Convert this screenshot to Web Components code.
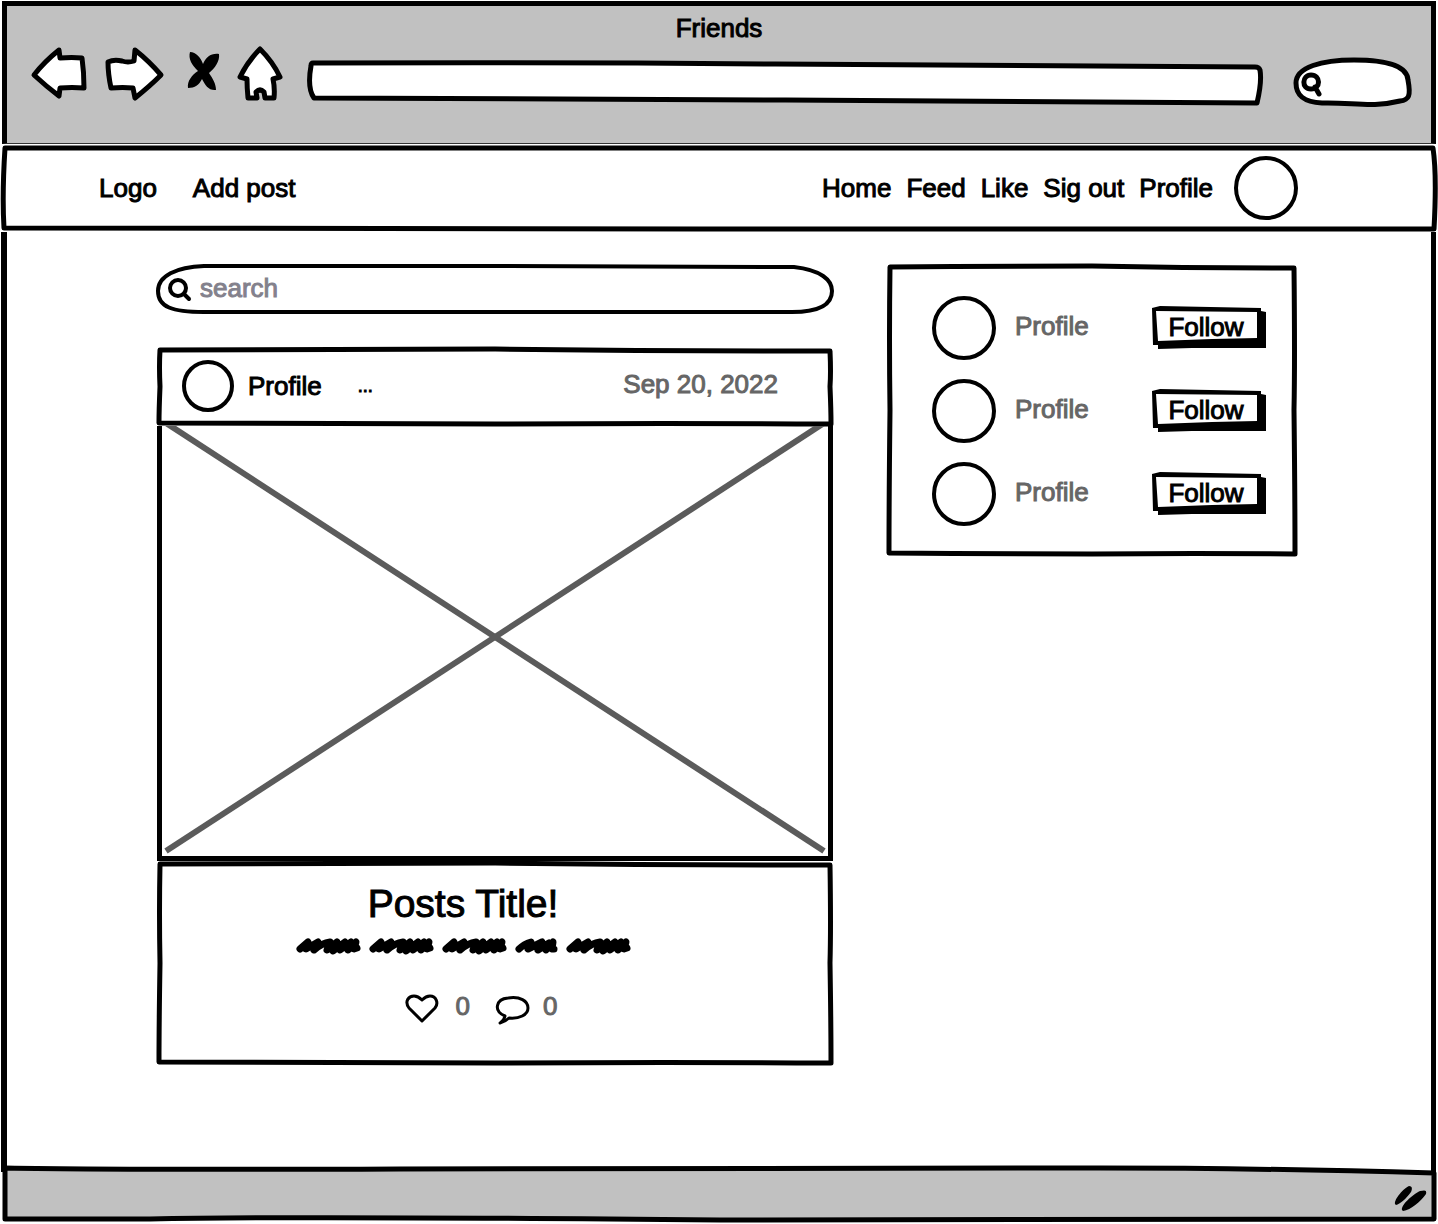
<!DOCTYPE html>
<html lang="en">
<head>
<meta charset="utf-8">
<title>Friends</title>
<style>
  html, body { margin: 0; height: 100%; }
  body { background: #fff; color: #000; font: 26px/32px "Liberation Sans", sans-serif; -webkit-text-stroke: 1px currentColor; }
</style>
</head>
<body>
<friends-app></friends-app>

<script>
const base = `
  *, *::before { box-sizing: border-box; }
  :host { display: block; box-sizing: border-box; -webkit-text-stroke: 1px currentColor; }
  svg { display: block; overflow: visible; }
  button, input { font: inherit; color: inherit; background: none; border: 0; padding: 0; margin: 0; outline-offset: 2px; }
  button { cursor: pointer; }
  .stack { display: grid; grid-template: minmax(0, 1fr) / minmax(0, 1fr); }
  .stack > *, ::slotted(header), ::slotted(div), ::slotted(ul) { grid-area: 1 / 1; min-width: 0; }
  .ink { contain: size; width: 100%; height: 100%; pointer-events: none; }
  .ink path { vector-effect: non-scaling-stroke; stroke: #000; stroke-width: 5; stroke-linejoin: round; stroke-linecap: round; fill: #fff; }
`;
function define(name, css, html, ready) {
  const t = document.createElement('template');
  t.innerHTML = `<style>${base}${css}</style>${html}`;
  customElements.define(name, class extends HTMLElement {
    constructor() {
      super();
      this.attachShadow({ mode: 'open' }).append(t.content.cloneNode(true));
    }
    connectedCallback() { if (ready) ready(this); }
  });
}
const ink = (w, h, body) =>
  `<svg class="ink" viewBox="0 0 ${w} ${h}" preserveAspectRatio="none" aria-hidden="true">${body}</svg>`;

/* A hand-drawn rectangle round whatever is slotted in; the ratio attribute
   ("width height") keeps the wobble of its edges equally small in every box */
define('sketch-box', `
  :host { display: grid; }
`, `<div class="stack">${ink(100, 100, '<path/>')}<slot></slot></div>`, host => {
  const [w, h] = (host.getAttribute('ratio') || '100 100').split(' ').map(Number);
  const r = w - 3, b = h - 3, m = w / 2;
  host.shadowRoot.querySelector('svg').setAttribute('viewBox', `0 0 ${w} ${h}`);
  host.shadowRoot.querySelector('path').setAttribute('d',
    `M4 3 Q${m / 2} 2 ${m} 2 Q${m * 1.5} 4 ${r - 1} 4 Q${r} ${h / 3} ${r - 1} ${h / 2} Q${r} ${h * .8} ${r} ${b + 1} Q${m * 1.5} ${b} ${m} ${b + 1} Q${m / 2} ${b + 1} 3 ${b} Q3 ${h * .8} 4 ${h / 2} Q3 ${h / 4} 4 3Z`);
});

/* Round user picture */
define('user-avatar', `
  :host { flex: none; width: 64px; height: 64px; border: 4px solid #000; border-radius: 50%; background: #fff; }
  :host([small]) { width: 52px; height: 52px; }
`, ``);

/* Button with a heavy drop edge */
define('sketch-button', `
  :host { flex: none; width: 114px; }
  button { width: 100%; height: 44px; }
  .ink path { stroke: none; }
  span { align-self: center; padding-right: 6px; padding-bottom: 2px; }
`, `<button class="stack" type="button">
  ${ink(114, 44, '<path style="fill:#000" d="M0 2 L8 0 L109 2 L109 5 L114 6 L114 42 L40 42 L6 43 L6 39 L1 39Z"/><path d="M4 5 L105 6 L105 32 L60 33 L6 35Z"/>')}
  <span><slot></slot></span>
</button>`);

/* Browser toolbar */
define('browser-bar', `
  :host { height: 143px; margin: 1px 2px 1px; border: 5px solid #000; border-bottom: 1px solid #333; background: #c1c1c1; }
  h1 { margin: 0; padding-top: 6px; font: inherit; text-align: center; line-height: 32px; }
  .row { display: flex; align-items: end; gap: 12px; padding: 0 18px 0 23px; }
  button { flex: none; }
  button path { fill: #fff; stroke: #000; stroke-width: 5; stroke-linejoin: round; }
  button.stop path { fill: #000; stroke: none; }
  .url { flex: 1; height: 46px; }
  .find { flex: none; width: 121px; height: 48px; margin-left: 16px; }
  .url input { margin: 6px 12px; }
  .find input { margin: 8px 16px 8px 34px; }
`, `<h1>Friends</h1>
<div class="row">
  <button type="button" aria-label="Back"><svg width="62" height="62" viewBox="30 44 62 62"><path d="M59 50 Q44 62 34 75 Q47 87 59 96 L60 88 Q72 87 84 88 Q84 72 82 58 Q72 57 60 58Z"/></svg></button>
  <button type="button" aria-label="Forward"><svg width="62" height="62" viewBox="104 44 62 62"><path d="M135 50 Q149 61 161 75 Q150 86 135 98 L133 88 Q123 87 111 88 Q108 74 108 62 Q114 59 122 61 Q128 63 134 61Z"/></svg></button>
  <button type="button" class="stop" aria-label="Stop"><svg width="46" height="62" viewBox="178 44 46 62"><path d="M190 52 C196 52 201 58 203 64 C206 57 211 53 219 54 C220 61 215 68 209 73 C213 79 216 84 216 90 C209 91 205 85 202 79 C199 85 195 88 188 88 C187 81 192 75 198 71 C192 65 188 59 190 52Z"/></svg></button>
  <button type="button" aria-label="Home"><svg width="58" height="62" viewBox="236 43 58 62"><path d="M260 48 Q273 61 280 76 L273 78 Q275 87 274 97 L265 97 L264 91 Q260 87 256 91 L257 97 L248 97 Q247 87 247 78 L240 76 Q248 60 260 48Z"/></svg></button>
  <div class="url stack">
    ${ink(959, 46, '<path d="M7 3 Q250 2 470 4 L950 7 Q954 7 955 10 Q957 22 952 43 L480 40 L8 38 Q1 28 5 6 Q5 3 7 3Z"/>')}
    <input type="text" aria-label="Address">
  </div>
  <div class="find stack">
    ${ink(121, 48, '<path d="M4 25 C4 9 30 2 62 2 C85 2 115 5 116 22 C119 38 117 42 108 43 C80 50 60 44 30 45 C12 44 4 38 4 25Z"/><path d="M19 17 C10 17 9 31 19 31 C29 31 29 17 19 17 M23 29 L27 36"/>')}
    <input type="search" aria-label="Web search">
  </div>
</div>`);

/* Site navigation */
define('site-nav', `
  :host { height: 86px; }
  .stack { height: 100%; }
  nav { display: flex; align-items: center; gap: 15px; padding: 0 140px 0 99px; }
  a { color: inherit; text-decoration: none; white-space: nowrap; }
  .left { display: flex; gap: 36px; margin-right: auto; }
  user-avatar { margin-left: 6px; }
`, `<div class="stack">
  ${ink(1438, 86, '<path d="M5 3 L700 3 L1433 3 Q1437 30 1434 84 L700 84 L4 83 Q2 50 5 3Z"/>')}
  <nav>
    <div class="left"><a href="#logo">Logo</a><a href="#add">Add post</a></div>
    <a href="#home">Home</a><a href="#feed">Feed</a><a href="#like">Like</a><a href="#out">Sig out</a><a href="#profile">Profile</a>
    <user-avatar></user-avatar>
  </nav>
</div>`);

/* Pill-shaped search field */
define('search-field', `
  .stack { height: 50px; }
  .ink path { stroke-width: 4; }
  label { display: flex; align-items: center; gap: 9px; padding: 0 24px 0 12px; }
  label svg { flex: none; }
  input { flex: 1; min-width: 0; height: 40px; padding-bottom: 2px; }
  input::placeholder { color: #83818c; opacity: 1; }
`, `<div class="stack">
  ${ink(678, 50, '<path d="M2 27 C2 12 20 3 48 2 L340 2 L638 3 C665 6 676 16 676 27 C676 42 662 48 636 48 L340 48 L48 48 C16 48 2 43 2 27Z"/>')}
  <label>
    <svg width="23" height="24" viewBox="0 0 23 24" fill="none" stroke="#000" stroke-width="4" stroke-linecap="round" aria-hidden="true"><circle cx="10" cy="11" r="8"/><path d="M16 17 L21 22"/></svg>
    <input type="search" placeholder="search" aria-label="search">
  </label>
</div>`);

/* One post: author line, picture, caption */
const longWord = '<svg width="65" height="20" viewBox="0 0 65 20"><path d="M4 13 L12 6 L10 13 L22 6 L18 14 Q26 7 34 6 L31 14 L41 6 L37 15 L49 6 L44 14 L55 6 L52 14 L60 6 L58 13 L61 12 M34 11 H54"/></svg>';
const shortWord = '<svg width="43" height="20" viewBox="0 0 43 20"><path d="M4 13 Q9 8 16 6 L13 13 L27 6 L23 14 L34 7 L31 14 L38 6 L37 13 L39 13"/></svg>';
define('post-card', `
  header { display: flex; align-items: center; padding: 0 56px 2px 26px; height: 79px; }
  .name { margin: 0 36px 0 14px; }
  .more { font-size: 18px; }
  time { margin-left: auto; padding-bottom: 4px; color: #666; }
  .picture { height: 435px; margin: 0 1px; border: solid #000; border-width: 0 5px 5px; overflow: hidden; }
  .picture svg { width: 100%; height: 100%; }
  .picture line { stroke: #5b5b5b; stroke-width: 6; vector-effect: non-scaling-stroke; }
  .caption { display: flex; flex-direction: column; align-items: center; padding: 21px 64px 0 0; height: 204px; }
  h2 { margin: 0; font-size: 39px; font-weight: 400; line-height: 44px; }
  .words { display: flex; gap: 8px; margin-top: 10px; }
  .words path { fill: none; stroke: #000; stroke-width: 7; stroke-linecap: round; stroke-linejoin: round; }
  .acts { display: flex; gap: 26px; margin-top: 34px; padding-left: 36px; }
  .acts button { display: flex; align-items: center; gap: 18px; }
  .acts button + button { gap: 14px; }
  .acts svg { fill: none; stroke: #000; stroke-width: 3; stroke-linejoin: round; }
  .acts span { color: #666; padding-bottom: 4px; }
`, `<sketch-box ratio="678 79"><header>
    <user-avatar small></user-avatar>
    <span class="name">Profile</span>
    <button class="more" type="button" aria-label="More">...</button>
    <time datetime="2022-09-20">Sep 20, 2022</time>
  </header></sketch-box>
  <div class="picture"><svg viewBox="0 0 666 430" preserveAspectRatio="none" role="img" aria-label="Picture"><line x1="4" y1="-3" x2="662" y2="425"/><line x1="4" y1="425" x2="662" y2="-3"/></svg></div>
  <sketch-box ratio="678 204"><div class="caption">
    <h2>Posts Title!</h2>
    <div class="words" aria-hidden="true">${longWord}${longWord}${longWord}${shortWord}${longWord}</div>
    <div class="acts">
      <button type="button" aria-label="Likes 0"><svg width="33" height="30" viewBox="0 0 33 30"><path d="M17 28 L4 15 C-1 8 4 3 9 3 C13 3 15 5 17 7 C19 5 21 3 25 3 C31 3 34 10 30 15Z"/></svg><span>0</span></button>
      <button type="button" aria-label="Comments 0"><svg width="33" height="30" viewBox="0 0 33 30"><path d="M9 23 C-3 18 0 6 12 5 C24 3 32 8 32 15 C32 22 23 26 13 25 Q9 29 4 30 Q8 28 9 23Z"/></svg><span>0</span></button>
    </div>
  </div></sketch-box>`);

/* People to follow */
define('follow-list', `
  ul { list-style: none; margin: 0; padding: 32px 32px 30px 46px; display: flex; flex-direction: column; gap: 19px; }
  li { display: flex; align-items: center; gap: 19px; }
  li span { margin-right: auto; color: #666; padding-bottom: 4px; }
`, `<sketch-box ratio="412 292"><ul>
  <li><user-avatar></user-avatar><span>Profile</span><sketch-button>Follow</sketch-button></li>
  <li><user-avatar></user-avatar><span>Profile</span><sketch-button>Follow</sketch-button></li>
  <li><user-avatar></user-avatar><span>Profile</span><sketch-button>Follow</sketch-button></li>
</ul></sketch-box>`);

/* Status strip along the window's bottom edge */
define('status-bar', `
  :host { height: 58px; }
  .stack { height: 100%; }
  .ink path { fill: #c1c1c1; }
  .grip { justify-self: end; align-self: center; margin-right: 10px; }
`, `<div class="stack">
  ${ink(1438, 58, '<path d="M5 2 Q120 4 400 3 L1100 2 Q1260 2 1434 7 L1434 53 L720 54 Q300 50 150 53 L5 53Z"/>')}
  <svg class="grip" width="34" height="28" viewBox="0 0 34 28" aria-hidden="true"><path d="M1 23 C0 18 10 7 15 5 C19 5 18 9 17 11 C12 18 6 23 2 24Z M8 29 C7 24 18 14 26 10 C31 9 33 9 32 13 C27 20 17 29 9 30Z"/></svg>
</div>`);

define('friends-app', `
  :host { display: flex; flex-direction: column; min-height: 100vh; }
  main { flex: 1; display: grid; grid-template-columns: minmax(0, 678fr) minmax(0, 412fr); align-items: start; gap: 52px; margin: 1px 2px -6px 1px; padding: 32px 133px 64px 149px; border: solid #000; border-width: 0 5px 0 6px; }
  .feed { display: grid; gap: 33px; }
`, `<browser-bar></browser-bar>
<site-nav></site-nav>
<main>
  <div class="feed"><search-field></search-field><post-card></post-card></div>
  <follow-list></follow-list>
</main>
<status-bar></status-bar>`);
</script>
</body>
</html>
